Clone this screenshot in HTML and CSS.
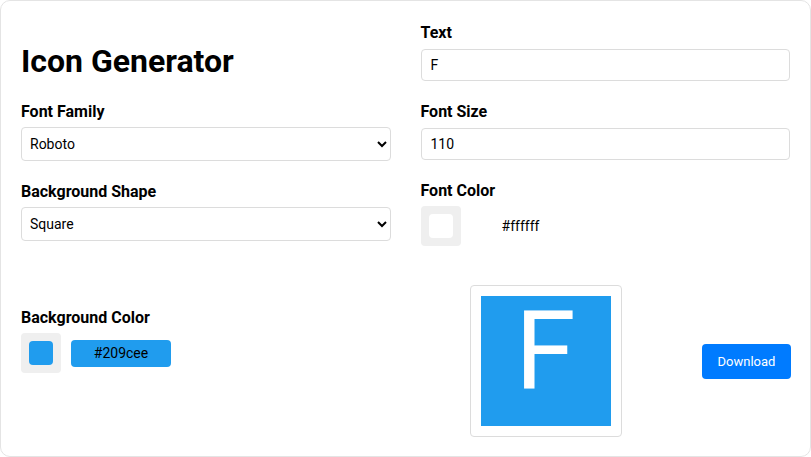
FILE: index.html
```html
<!DOCTYPE html>
<html lang="en">
<head>
<meta charset="utf-8">
<title>Icon Generator</title>
<link rel="stylesheet" href="styles.css">
</head>
<body>
<div class="card">
  <div class="grid">
    <div class="col">
      <h1 class="title">Icon Generator</h1>
      <div class="group">
        <label class="label">Font Family</label>
        <select class="select"><option>Roboto</option></select>
      </div>
      <div class="group">
        <label class="label">Background Shape</label>
        <select class="select"><option>Square</option></select>
      </div>
    </div>
    <div class="col">
      <div class="group">
        <label class="label">Text</label>
        <input class="input" type="text" value="F">
      </div>
      <div class="group">
        <label class="label">Font Size</label>
        <input class="input" type="text" value="110">
      </div>
      <div class="group">
        <label class="label">Font Color</label>
        <div class="color-row">
          <div class="swatch"><div class="swatch-inner swatch-white"></div></div>
          <input class="hex hex-white" type="text" value="#ffffff">
        </div>
      </div>
    </div>
    <div class="col bottom-left">
      <div class="group">
        <label class="label">Background Color</label>
        <div class="color-row">
          <div class="swatch"><div class="swatch-inner swatch-blue"></div></div>
          <input class="hex hex-blue" type="text" value="#209cee">
        </div>
      </div>
    </div>
    <div class="preview-row">
      <div class="preview">
        <div class="canvas">F</div>
      </div>
      <button class="download">Download</button>
    </div>
  </div>
</div>
</body>
</html>
```
FILE: styles.css
```css
* { box-sizing: border-box; }
html, body { margin: 0; padding: 0; background: #ffffff; }
body { font-family: Roboto, "Liberation Sans", Arial, sans-serif; color: #000; }

.card {
  width: 811px;
  height: 457px;
  border: 1px solid #e4e4e4;
  border-radius: 10px;
  padding: 22px 20px 20px 20px;
  background: #fff;
}

.grid {
  display: grid;
  grid-template-columns: 1fr 1fr;
  column-gap: 30px;
}

.col { display: flex; flex-direction: column; }

.title {
  margin: 20px 0 22px 0;
  font-size: 32px;
  font-weight: 700;
  line-height: 37px;
}

.group { display: flex; flex-direction: column; margin-bottom: 21px; }
.col .group:last-child { margin-bottom: 0; }

.label {
  font-size: 16px;
  font-weight: 700;
  line-height: 20px;
  margin-bottom: 5px;
}

.select {
  width: 100%;
  height: 34px;
  padding: 0 4px;
  border: 1px solid #dcdcdc;
  border-radius: 4px;
  background: #fff;
  font-family: inherit;
  font-size: 14px;
  color: #000;
}

.input {
  width: 100%;
  height: 32px;
  padding: 0 9px;
  margin-top: 1px;
  border: 1px solid #dcdcdc;
  border-radius: 4px;
  font-family: inherit;
  font-size: 14px;
  color: #000;
}

.color-row { display: flex; align-items: center; }

.swatch {
  width: 40px;
  height: 40px;
  padding: 8px;
  background: #efefef;
  border-radius: 4px;
}
.swatch-inner { width: 24px; height: 24px; border-radius: 4px; }
.swatch-white { background: #ffffff; }
.swatch-blue { background: #209cee; }

.hex {
  width: 100px;
  height: 27px;
  margin-left: 10px;
  border: none;
  border-radius: 4px;
  text-align: center;
  font-family: inherit;
  font-size: 14px;
  color: #000;
  padding: 0;
}
.hex-white { background: #ffffff; }
.hex-blue { background: #209cee; }

.bottom-left { padding-top: 62px; }

.preview-row {
  display: flex;
  align-items: center;
  padding-top: 39px;
}

.preview {
  margin-left: 49px;
  padding: 10px;
  border: 1px solid #dcdcdc;
  border-radius: 4px;
}

.canvas {
  width: 130px;
  height: 130px;
  background: #209cee;
  color: #fff;
  font-family: Roboto, sans-serif;
  font-size: 110px;
  line-height: 110px;
  text-align: center;
}

.download {
  margin-left: auto;
  margin-right: -1px;
  width: 89px;
  height: 35px;
  padding: 0;
  border: none;
  border-radius: 4px;
  background: #007bff;
  color: #fff;
  font-family: inherit;
  font-size: 13px;
}
```
